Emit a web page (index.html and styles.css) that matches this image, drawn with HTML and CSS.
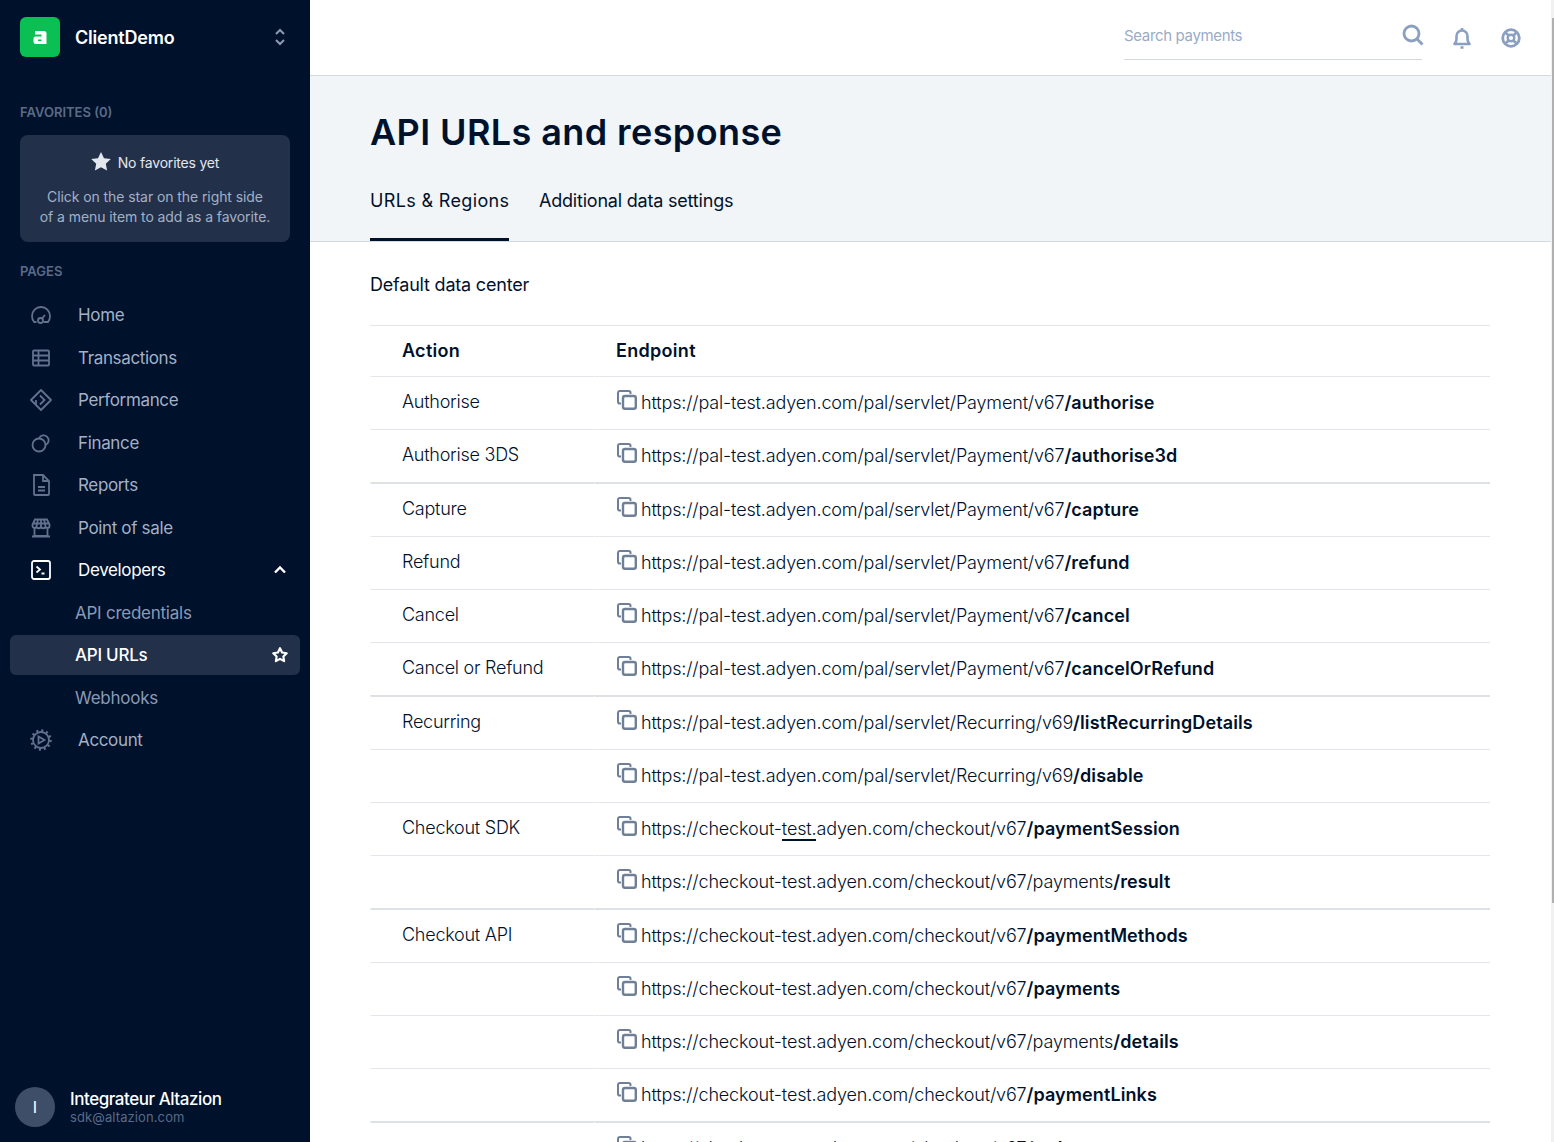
FILE: index.html
```html
<!DOCTYPE html>
<html lang="en">
    <head>
        <meta charset="utf-8">
        <title>API URLs and response</title>
        <link rel="stylesheet" href="styles.css">
    </head>
    <body>
    <svg class="defs" width="0" height="0">
        <symbol id="copy" viewBox="0 0 20 20">
            <path d="M4 13.500H2.800A1.800 1.800 0 0 1 1 11.700V2.800A1.800 1.800 0 0 1 2.800 1h8.900a1.800 1.800 0 0 1 1.800 1.800V4" fill="none" stroke="currentColor" stroke-width="2"/>
            <rect x="6" y="6" width="12.800" height="12.800" rx="2" fill="none" stroke="currentColor" stroke-width="2.400"/>
        </symbol>
    </svg>
    <div class="app">
        <aside class="side">
            <div class="account">
                <span class="logo"><svg width="14" height="13" viewBox="0 0 14 13"><path d="M2 0h9a2.500 2.500 0 0 1 2.500 2.500V13H3a2.500 2.500 0 0 1-2.500-2.500V7.500A2 2 0 0 1 2.500 5.500H8.500V3.500H2zM5 8.500v1.500h3.500V8.500z" fill="#fff" fill-rule="evenodd"/></svg></span>
                <span class="account-name">ClientDemo</span>
                <svg class="updown" width="12" height="20" viewBox="0 0 12 20"><path d="M2 7l4-4 4 4M2 13l4 4 4-4" fill="none" stroke="#8a9ab5" stroke-width="2"/></svg>
            </div>
            <h4 class="side-title fav-title">FAVORITES (0)</h4>
            <div class="fav-box">
                <p class="fav-head"><svg width="20" height="19" viewBox="0 0 20 19"><path d="M10 0l3 6.200 6.800.9-5 4.700 1.300 6.700-6.100-3.300-6.100 3.300 1.300-6.700-5-4.700 6.800-.9z" fill="#e3e7ee"/></svg>No favorites yet</p>
                <p class="fav-text">Click on the star on the right side<br>of a menu item to add as a favorite.</p>
            </div>
            <h4 class="side-title pages-title">PAGES</h4>
            <ul class="nav">
                <li><svg width="20" height="20" viewBox="0 0 20 20" fill="none" stroke="currentColor" stroke-width="1.800"><path d="M5.500 17H3.200C1.800 15.500 1 13.700 1 11a9 9 0 0 1 18 0c0 2.500-.8 4.500-2 6h-4.500"/><circle cx="9.500" cy="15.500" r="2.500"/><path d="M11 13.500l3-3.500"/></svg><span>Home</span></li>
                <li><svg width="20" height="20" viewBox="0 0 20 20" fill="none" stroke="currentColor" stroke-width="1.800"><rect x="2" y="2.500" width="16" height="15" rx="1"/><path d="M2 7.500h16M2 12.500h16M7.500 2.500v15"/></svg><span>Transactions</span></li>
                <li><svg width="22" height="22" viewBox="0 0 22 22" fill="none" stroke="currentColor" stroke-width="1.800"><path d="M11 1l10 10-10 10L1 11z" stroke-linejoin="round"/><path d="M10 6.500l4.500 4.500-4.500 4.500M6 11v4.500"/></svg><span>Performance</span></li>
                <li><svg width="20" height="20" viewBox="0 0 20 20" fill="none" stroke="currentColor" stroke-width="1.800"><circle cx="8" cy="12" r="6.500"/><path d="M8 5.500a5 5 0 1 1 6.500 6.500"/></svg><span>Finance</span></li>
                <li><svg width="20" height="24" viewBox="0 0 20 24" fill="none" stroke="currentColor" stroke-width="1.800"><path d="M3 2h9l6 6v13a1 1 0 0 1-1 1H4a1 1 0 0 1-1-1z"/><path d="M12 2v6h6M7 14h7M7 17.500h7"/></svg><span>Reports</span></li>
                <li><svg width="20" height="20" viewBox="0 0 20 20" fill="none" stroke="currentColor" stroke-width="1.800"><path d="M4 1.500h12l2.500 5v1.500a2 2 0 0 1-4 0 2.200 2.200 0 0 1-4.500 0 2.200 2.200 0 0 1-4.500 0 2 2 0 0 1-4 0V6.500zM7 1.500L5.500 8M13 1.500L14.500 8M10 1.500V8M1.500 5.500h17M3.500 10v8h13v-8M1 18.500h18"/></svg><span>Point of sale</span></li>
                <li class="on"><svg width="20" height="20" viewBox="0 0 20 20" fill="none" stroke="currentColor" stroke-width="1.800"><rect x="1" y="1" width="18" height="18" rx="2"/><path d="M5.500 6.500l3.500 3-3.500 3M10.500 13.500h3"/></svg><span>Developers</span><svg class="chev" width="14" height="10" viewBox="0 0 14 10"><path d="M2 7.500l5-5 5 5" fill="none" stroke="#fff" stroke-width="2.400"/></svg></li>
                <li class="sub">API credentials</li>
                <li class="sub cur">API URLs<svg class="star" width="18" height="18" viewBox="0 0 20 20"><path d="M10 2.500l2.300 4.700 5.200.8-3.800 3.600.9 5.200-4.600-2.500-4.600 2.500.9-5.200L2.500 8l5.200-.8z" fill="none" stroke="#fff" stroke-width="2.400" stroke-linejoin="round"/></svg></li>
                <li class="sub">Webhooks</li>
                <li><svg width="22" height="22" viewBox="0 0 22 22" fill="none" stroke="currentColor"><circle cx="11" cy="11" r="8" stroke-width="1.800"/><circle cx="11" cy="11" r="9.500" stroke-width="2.500" stroke-dasharray="2 2.970"/><path d="M8.500 7.500l6 3.500-6 3.500z" stroke-width="1.800"/></svg><span>Account</span></li>
            </ul>
            <div class="user">
                <span class="avatar">I</span>
                <div>
                    <div class="user-name">Integrateur Altazion</div>
                    <div class="user-mail">sdk@altazion.com</div>
                </div>
            </div>
        </aside>
        <main class="main">
            <header class="top">
                <div class="search"><span>Search payments</span>
                    <svg width="22" height="22" viewBox="0 0 22 22" fill="none" stroke="#8ba0c0" stroke-width="2.800"><circle cx="9.500" cy="9.500" r="7.500"/><path d="M15 15l5.500 5.500"/></svg>
                </div>
                <svg class="bell" width="20" height="22" viewBox="0 0 20 22" fill="none" stroke="#8ba0c0" stroke-width="2.600"><path d="M2.500 17c1.500-1.500 2-2.500 2-5V9a5.500 5.500 0 0 1 11 0v3c0 2.500.5 3.500 2 5z" stroke-linejoin="round"/><path d="M10 1v2M8.500 20.500h3"/></svg>
                <svg class="help" width="20" height="20" viewBox="0 0 20 20" fill="none" stroke="#8ba0c0"><circle cx="10" cy="10" r="8.300" stroke-width="2.800"/><circle cx="10" cy="10" r="3.300" stroke-width="2.400"/><path d="M4.500 4.500l3 3M15.500 4.500l-3 3M4.500 15.500l3-3M15.500 15.500l-3-3" stroke-width="2.800"/></svg>
            </header>
            <section class="head">
                <h1>API URLs and response</h1>
                <div class="tabs">
                    <a class="tab active">URLs &amp; Regions</a>
                    <a class="tab">Additional data settings</a>
                </div>
            </section>
            <section class="body">
                <h2>Default data center</h2>
                <table class="urls">
                    <thead><tr><th>Action</th><th>Endpoint</th></tr></thead>
                    <tbody>
                        <tr><td>Authorise</td><td><svg class="copy"><use href="#copy"/></svg>https://pal-test.adyen.com/pal/servlet/Payment/v67<b>/authorise</b></td></tr>
                        <tr class="end"><td>Authorise 3DS</td><td><svg class="copy"><use href="#copy"/></svg>https://pal-test.adyen.com/pal/servlet/Payment/v67<b>/authorise3d</b></td></tr>
                        <tr><td>Capture</td><td><svg class="copy"><use href="#copy"/></svg>https://pal-test.adyen.com/pal/servlet/Payment/v67<b>/capture</b></td></tr>
                        <tr><td>Refund</td><td><svg class="copy"><use href="#copy"/></svg>https://pal-test.adyen.com/pal/servlet/Payment/v67<b>/refund</b></td></tr>
                        <tr><td>Cancel</td><td><svg class="copy"><use href="#copy"/></svg>https://pal-test.adyen.com/pal/servlet/Payment/v67<b>/cancel</b></td></tr>
                        <tr class="end"><td>Cancel or Refund</td><td><svg class="copy"><use href="#copy"/></svg>https://pal-test.adyen.com/pal/servlet/Payment/v67<b>/cancelOrRefund</b></td></tr>
                        <tr><td>Recurring</td><td><svg class="copy"><use href="#copy"/></svg>https://pal-test.adyen.com/pal/servlet/Recurring/v69<b>/listRecurringDetails</b></td></tr>
                        <tr><td></td><td><svg class="copy"><use href="#copy"/></svg>https://pal-test.adyen.com/pal/servlet/Recurring/v69<b>/disable</b></td></tr>
                        <tr><td>Checkout SDK</td><td><svg class="copy"><use href="#copy"/></svg>https://checkout-<span class="hover">test.</span>adyen.com/checkout/v67<b>/paymentSession</b></td></tr>
                        <tr class="end"><td></td><td><svg class="copy"><use href="#copy"/></svg>https://checkout-test.adyen.com/checkout/v67/payments<b>/result</b></td></tr>
                        <tr><td>Checkout API</td><td><svg class="copy"><use href="#copy"/></svg>https://checkout-test.adyen.com/checkout/v67<b>/paymentMethods</b></td></tr>
                        <tr><td></td><td><svg class="copy"><use href="#copy"/></svg>https://checkout-test.adyen.com/checkout/v67<b>/payments</b></td></tr>
                        <tr><td></td><td><svg class="copy"><use href="#copy"/></svg>https://checkout-test.adyen.com/checkout/v67/payments<b>/details</b></td></tr>
                        <tr class="end"><td></td><td><svg class="copy"><use href="#copy"/></svg>https://checkout-test.adyen.com/checkout/v67<b>/paymentLinks</b></td></tr>
                        <tr><td></td><td><svg class="copy"><use href="#copy"/></svg>https://checkout-test.adyen.com/checkout/v67<b>/orders</b></td></tr>
                    </tbody>
                </table>
            </section>
        </main>
        <div class="scroll"><div class="thumb"></div></div>
    </div>
    </body>
</html>
```

FILE: styles.css
```css
html,body{
    margin:0;
    height:100%;
    overflow:hidden;
}
body{
    font-family:Inter,"Liberation Sans",sans-serif;
    color:#00112c;
    background:#fff;
}
h1,h2,h4,p,ul{
    margin:0;
    padding:0;
    list-style:none;
}
.defs{
    position:absolute;
}
.app{
    display:flex;
    height:1142px;
}

/* sidebar */
.side{
    width:310px;
    flex:none;
    background:#00112c;
    display:flex;
    flex-direction:column;
    color:#8a9ab5;
}
.account{
    display:flex;
    align-items:center;
    height:40px;
    padding:17px 20px 0;
}
.logo{
    width:40px;
    height:40px;
    border-radius:6px;
    background:#0abf53;
    display:flex;
    align-items:center;
    justify-content:center;
}
.account-name{
    margin-left:15px;
    flex:1;
    font-size:18px;
    font-weight:600;
    letter-spacing:-.2px;
    color:#fff;
}
.updown{
    margin-right:4px;
}
.side-title{
    font-size:13px;
    font-weight:600;
    line-height:16px;
    color:#5a6b87;
    padding-left:20px;
}
.fav-title{
    margin-top:47px;
}
.fav-box{
    margin:15px 20px 0;
    height:107px;
    background:#22304a;
    border-radius:8px;
    text-align:center;
    font-size:14px;
    box-sizing:border-box;
    padding-top:18px;
}
.fav-head{
    display:flex;
    align-items:center;
    justify-content:center;
    gap:7px;
    color:#e3e7ee;
    line-height:20px;
    letter-spacing:-.2px;
}
.fav-head svg{
    margin-top:-3px;
}
.fav-text{
    margin-top:14px;
    line-height:20px;
    color:#a3b0c6;
    letter-spacing:-.08px;
}
.pages-title{
    margin-top:21px;
}
.nav{
    margin-top:16px;
    padding:0 10px;
    font-size:17px;
}
.nav li{
    display:flex;
    align-items:center;
    height:40px;
    margin-bottom:2.500px;
    padding-left:21px;
    border-radius:6px;
    color:#a3b0c6;
    letter-spacing:-.35px;
}
.nav li svg{
    flex:none;
    color:#62728d;
    width:22px;
    margin-left:-1px;
}
.nav li span{
    margin-left:26px;
}
.nav .on,.nav .on svg{
    color:#fff;
}
.nav .chev{
    margin-left:auto;
    margin-right:9px;
}
.nav .sub{
    padding-left:65px;
    color:#8a9ab5;
    letter-spacing:-.25px;
}
.nav .cur{
    background:#22304a;
    color:#fff;
    font-weight:500;
}
.nav .star{
    margin-left:auto;
    margin-right:9px;
}
.user{
    margin-top:auto;
    display:flex;
    align-items:center;
    padding:0 15px 15px;
}
.avatar{
    width:40px;
    height:40px;
    border-radius:50%;
    background:#3f4e68;
    color:#fff;
    display:flex;
    align-items:center;
    justify-content:center;
    font-size:16px;
    margin-right:15px;
}
.user-name{
    font-size:17px;
    line-height:21px;
    font-weight:500;
    letter-spacing:-.45px;
    color:#fff;
}
.user-mail{
    font-size:13px;
    line-height:15px;
    letter-spacing:.1px;
    color:#5a6b87;
}

/* main column */
.main{
    flex:1;
    min-width:0;
    overflow:hidden;
}
.scroll{
    width:3px;
    flex:none;
    background:#f1f1f1;
}
.thumb{
    width:2px;
    height:885px;
    margin:18px 0 0 1px;
    background:#b0b0b0;
}
.top{
    height:75px;
    border-bottom:1px solid #d4d9e0;
    display:flex;
    align-items:center;
    padding-left:814px;
}
.search{
    width:298px;
    height:48px;
    box-sizing:border-box;
    border-bottom:1px solid #d4d9e0;
    display:flex;
    align-items:center;
    justify-content:space-between;
    font-size:15px;
    letter-spacing:-.35px;
    color:#9aabc6;
    margin-top:-3px;
}
.search svg{
    margin-right:-2px;
    margin-top:-1px;
}
.bell{
    margin:0 0 0 30px;
}
.help{
    margin:1px 0 0 29px;
}
.head{
    height:166px;
    box-sizing:border-box;
    background:#f2f5f8;
    border-bottom:1px solid #d4d9e0;
    padding:32px 0 0 60px;
}
h1{
    font-size:36px;
    line-height:48px;
    font-weight:600;
    letter-spacing:.4px;
}
.tabs{
    display:flex;
    gap:29.500px;
    margin-top:20px;
}
.tab{
    font-size:18px;
    line-height:24px;
    padding:13px 0 25px;
    height:24px;
    letter-spacing:-.2px;
}
.tab.active{
    border-bottom:3px solid #00112c;
    letter-spacing:.35px;
}

.body{
    padding:31px 60px 0;
}
h2{
    font-size:18px;
    line-height:24px;
    font-weight:400;
    letter-spacing:-.2px;
}
.urls{
    margin-top:28px;
    width:1120px;
    border-collapse:separate;
    border-spacing:0;
    border-top:1px solid #e3e6eb;
    font-size:18px;
    font-weight:300;
    letter-spacing:-.15px;
}
.urls th{
    height:48px;
    padding:0 0 2px 22px;
    text-align:left;
    font-weight:600;
    font-size:18px;
    letter-spacing:.3px;
}
.urls td{
    height:48px;
    padding:0 0 4px 22px;
    border-top:1px solid #e3e6eb;
    border-left:1px solid #fff;
    white-space:nowrap;
}
.urls th:first-child{
    width:192px;
    padding-left:32px;
}
.urls td:first-child{
    width:192px;
    padding-left:31px;
    letter-spacing:-.25px;
}
.urls .end + tr td{
    border-top:2px solid #dde0e5;
}
.urls b{
    font-weight:600;
    letter-spacing:.1px;
}
.copy{
    width:20px;
    height:20px;
    color:#6f7f96;
    margin-right:4px;
    vertical-align:-1px;
}
.hover{
    border-bottom:2px solid #00112c;
}
```
